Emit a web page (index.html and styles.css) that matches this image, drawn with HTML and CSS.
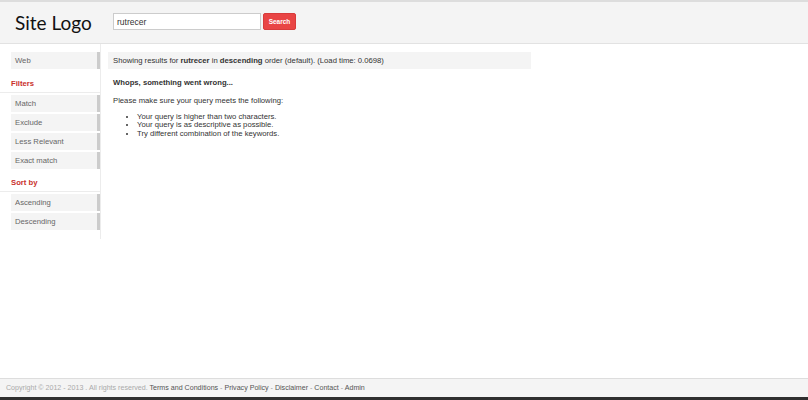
FILE: index.html
```html
<!DOCTYPE html>
<html>
    <head>
        <meta charset="utf-8">
        <title>Search</title>
        <link rel="stylesheet" href="styles.css">
    </head>
    <body>
        <div class="header">
            <div class="logo">Site Logo</div>
            <form class="search">
                <input class="search-box" type="text" value="rutrecer">
                <button class="search-btn" type="button">Search</button>
            </form>
        </div>
        <div class="main">
            <div class="sidebar">
                <div class="side-item">Web</div>
                <div class="side-head">Filters</div>
                <div class="side-item">Match</div>
                <div class="side-item">Exclude</div>
                <div class="side-item">Less Relevant</div>
                <div class="side-item">Exact match</div>
                <div class="side-head">Sort by</div>
                <div class="side-item">Ascending</div>
                <div class="side-item">Descending</div>
            </div>
            <div class="content">
                <div class="info">Showing results for <b>rutrecer</b> in <b>descending</b> order (default). (Load time: 0.0698)</div>
                <p class="oops">Whops, something went wrong...</p>
                <p>Please make sure your query meets the following:</p>
                <ul class="tips">
                    <li>Your query is higher than two characters.</li>
                    <li>Your query is as descriptive as possible.</li>
                    <li>Try different combination of the keywords.</li>
                </ul>
            </div>
        </div>
        <div class="footer">
            <span class="copy">Copyright &copy; 2012 - 2013 . All rights reserved.</span>
            <a href="#">Terms and Conditions</a> - <a href="#">Privacy Policy</a> - <a href="#">Disclaimer</a> - <a href="#">Contact</a> - <a href="#">Admin</a>
        </div>
        <div class="taskbar"></div>
    </body>
</html>
```
FILE: styles.css
```css
html, body {
    margin: 0;
    height: 100%;
}

body {
    display: flex;
    flex-direction: column;
    font-family: "Liberation Sans", Arial, sans-serif;
    font-size: 7.7px;
    color: #333;
    background-color: #fff;
}

    /*top bar*/

.header {
    display: flex;
    align-items: center;
    height: 41px;
    border-top: 2px solid #ddd;
    border-bottom: 1px solid #e2e2e2;
    background-color: #f4f4f4;
}

.logo {
    width: 98px;
    padding-left: 15px;
    font-family: Lato, "Open Sans", sans-serif;
    font-size: 19px;
    color: #111;
}

.search {
    display: flex;
    margin: -2px 0 0 0;
}

.search-box {
    width: 140px;
    height: 15px;
    padding: 0 3px;
    margin: 0;
    border: 1px solid #ccc;
    font-family: "Liberation Sans", Arial, sans-serif;
    font-size: 8.5px;
    color: #333;
    outline: none;
}

.search-btn {
    width: 33px;
    height: 17px;
    margin-left: 2px;
    padding: 0;
    border: 1px solid #d83b3b;
    border-radius: 2px;
    background-color: #e94545;
    color: #fff;
    font-family: "Liberation Sans", Arial, sans-serif;
    font-size: 6.5px;
    font-weight: bold;
}

    /*body*/

.main {
    display: flex;
    flex: 1;
    align-items: flex-start;
}

.sidebar {
    width: 89px;
    padding: 8px 0 7px 11px;
    border-right: 1px solid #ececec;
}

.side-item {
    height: 17px;
    line-height: 17px;
    margin-bottom: 2px;
    padding-left: 4px;
    background-color: #f4f4f4;
    border-right: 3px solid #ccc;
    color: #666;
}

.side-head {
    margin: 9.5px 0 2px -11px;
    padding: 0 0 4px 11px;
    line-height: 9px;
    border-bottom: 1px solid #ececec;
    color: #c9302c;
    font-weight: bold;
}

.content {
    padding: 8px 0 0 7px;
}

.info {
    width: 418px;
    height: 17px;
    line-height: 17px;
    padding-left: 5px;
    background-color: #f4f4f4;
}

.content p {
    margin: 0;
    padding-left: 5px;
    line-height: 9px;
}

.content p.oops {
    margin: 8.5px 0 9px 0;
    font-weight: bold;
}

.tips {
    margin: 8px 0 0 0;
    padding-left: 29px;
    line-height: 8.7px;
}

    /*bottom bar*/

.footer {
    height: 18px;
    line-height: 18px;
    padding-left: 6px;
    border-top: 1px solid #ddd;
    background-color: #f4f4f4;
    font-size: 7.1px;
    color: #999;
}

.footer a {
    color: #555;
    text-decoration: none;
}

.footer .copy {
    color: #aaa;
}

.taskbar {
    height: 3px;
    background-color: #2f2f2f;
}
```
